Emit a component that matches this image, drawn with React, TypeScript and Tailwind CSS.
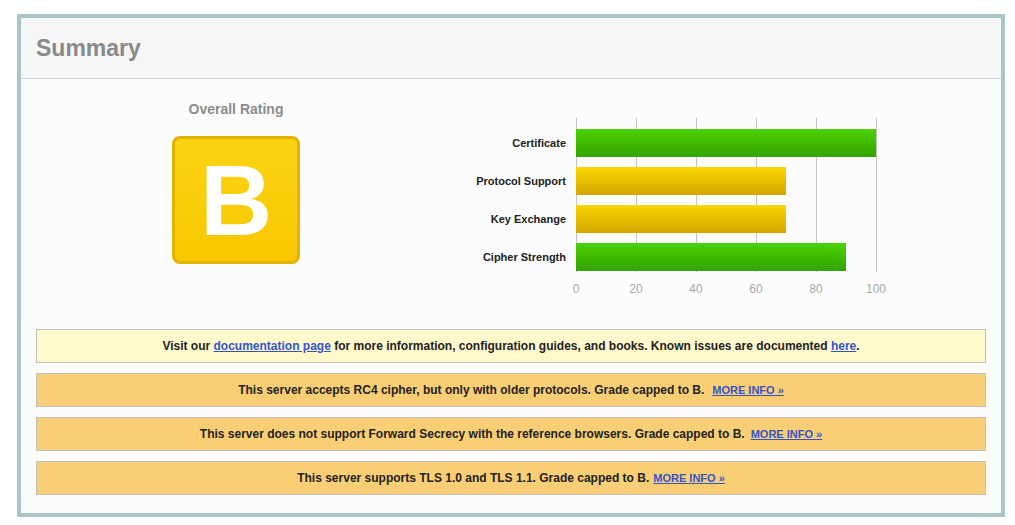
const bars = [
  { label: 'Certificate', value: 100, tone: 'green' },
  { label: 'Protocol Support', value: 70, tone: 'yellow' },
  { label: 'Key Exchange', value: 70, tone: 'yellow' },
  { label: 'Cipher Strength', value: 90, tone: 'green' },
] as const

const ticks = [0, 20, 40, 60, 80, 100]

const warnings = [
  { text: 'This server accepts RC4 cipher, but only with older protocols. Grade capped to B.', gap: 'ml-[8px]' },
  { text: 'This server does not support Forward Secrecy with the reference browsers. Grade capped to B.', gap: 'ml-[6px]' },
  { text: 'This server supports TLS 1.0 and TLS 1.1. Grade capped to B.', gap: 'ml-[4px]' },
]

export default function App() {
  return (
    <div className="min-h-screen bg-white pt-[14px] pl-[17px] font-['Liberation_Sans',Arial,sans-serif]">
      <section className="w-[988px] border-4 border-[#a9c5c5] bg-[#fcfcfc]">
        <header className="flex h-[61px] items-center border-b border-[#c6d3d5] bg-[#f6f6f6] pl-[15px]">
          <h1 className="text-[23px] font-bold text-[#8a8a8a]">Summary</h1>
        </header>

        <div className="px-[15px] pb-[18px]">
          <div className="flex">
            <div className="flex w-[400px] flex-col items-center pt-[22px]">
              <p className="text-[14px] leading-[17px] font-bold text-[#8c8c8c]">Overall Rating</p>
              <div className="mt-[18px] flex h-[128px] w-[128px] items-center justify-center rounded-[8px] border-[3px] border-[#e1b400] bg-gradient-to-b from-[#fbd313] to-[#f8c700]">
                <span className="text-[100px] leading-none font-bold text-white">B</span>
              </div>
            </div>

            <RatingChart />
          </div>

          <div className="mt-[33px] flex flex-col gap-[10px]">
            <div className="flex h-[34px] items-center justify-center border border-[#c0c0c0] bg-[#fff9cc] text-[12px] font-bold text-[#222]">
              <span>
                Visit our <a href="#" className="text-[#3355cc] underline">documentation page</a> for more information, configuration guides, and books. Known issues are documented <a href="#" className="text-[#3355cc] underline">here</a>.
              </span>
            </div>
            {warnings.map((w) => (
              <div key={w.text} className="flex h-[34px] items-center justify-center border border-[#c0c0c0] bg-[#f9ce74] text-[12px] font-bold text-[#222]">
                <span>{w.text}</span>
                <a href="#" className={`${w.gap} text-[11px] font-bold text-[#3355cc] underline`}>MORE INFO »</a>
              </div>
            ))}
          </div>
        </div>
      </section>
    </div>
  )
}

function RatingChart() {
  return (
    <div className="flex pt-[39px]">
      <div className="flex w-[140px] flex-col gap-[10px] pt-[11px] pr-[10px] text-right">
        {bars.map((b) => (
          <div key={b.label} className="flex h-[28px] items-center justify-end text-[11px] font-bold text-[#222]">
            {b.label}
          </div>
        ))}
      </div>

      <div>
        <div className="relative w-[301px]">
          <div className="absolute inset-0 flex justify-between">
            {ticks.map((t) => (
              <div key={t} className="w-px bg-[#c4c4c4]" />
            ))}
          </div>
          <div className="relative flex flex-col gap-[10px] pt-[11px] pb-px">
            {bars.map((b) => (
              <div
                key={b.label}
                className={`h-[28px] ${b.tone === 'green' ? 'bg-gradient-to-b from-[#4cd200] to-[#31a400]' : 'bg-gradient-to-b from-[#fbd600] to-[#d5a600]'}`}
                style={{ width: b.value * 3 }}
              />
            ))}
          </div>
        </div>
        <div className="mt-[10px] flex w-[300px] justify-between">
          {ticks.map((t) => (
            <div key={t} className="flex w-0 justify-center text-[12px] leading-[14px] text-[#a8a8a8]">
              {t}
            </div>
          ))}
        </div>
      </div>
    </div>
  )
}
